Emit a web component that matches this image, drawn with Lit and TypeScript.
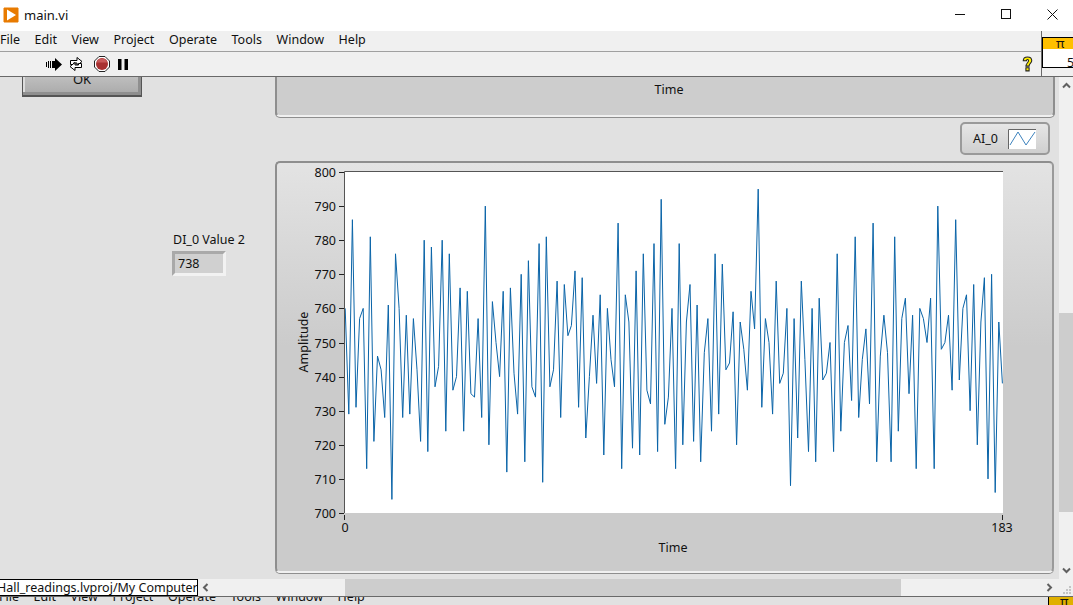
import { LitElement, html, svg, css } from "lit";
import { customElement } from "lit/decorators.js";

// waveform read off the reference, one value per sample
const SAMPLES = [
  760, 729, 786, 731, 757, 760, 713, 781, 721, 746, 742, 728, 761, 704, 776, 760, 728, 758, 729, 757,
  742, 721, 780, 718, 778, 737, 743, 780, 724, 776, 736, 740, 766, 724, 765, 735, 734, 757, 728, 790,
  720, 762, 750, 740, 765, 712, 766, 741, 729, 770, 715, 774, 737, 734, 779, 709, 781, 737, 742, 768,
  728, 767, 752, 755, 771, 731, 769, 722, 740, 758, 738, 764, 717, 760, 745, 737, 785, 713, 764, 756,
  719, 771, 717, 776, 736, 732, 779, 718, 792, 726, 734, 760, 713, 779, 720, 756, 767, 721, 761, 715,
  747, 757, 724, 776, 729, 773, 742, 744, 759, 720, 756, 748, 736, 765, 754, 795, 731, 757, 750, 729,
  768, 738, 741, 760, 708, 757, 722, 768, 745, 718, 760, 715, 763, 739, 741, 750, 718, 776, 724, 750,
  755, 733, 781, 728, 745, 754, 732, 785, 715, 746, 758, 747, 715, 781, 724, 757, 763, 735, 758, 713,
  760, 757, 750, 763, 713, 790, 748, 750, 758, 736, 786, 739, 760, 764, 730, 767, 720, 756, 769, 710,
  770, 706, 756, 738,
];

const MENU = ["File", "Edit", "View", "Project", "Operate", "Tools", "Window", "Help"];
const TICKS = [800, 790, 780, 770, 760, 750, 740, 730, 720, 710, 700];

// plot geometry inside the 778x413 graph svg
const PLOT = { x: 69, y: 11, w: 658, h: 341 };
const sx = (i: number) => PLOT.x + 0.2 + (i * 657.2) / 183;
const sy = (v: number) => PLOT.y + ((800 - v) / 100) * PLOT.h;

@customElement("app-root")
export class AppRoot extends LitElement {
  static styles = css`
    :host {
      display: block;
      position: relative;
      width: 1073px;
      height: 605px;
      overflow: hidden;
      background: #e1e1e1;
      font-family: "Noto Sans", "Liberation Sans", sans-serif;
      font-size: 12.5px;
      color: #111;
    }
    .title {
      height: 31px;
      box-sizing: border-box;
      padding: 0 0 2px 3px;
      background: #fff;
      display: flex;
      align-items: center;
      gap: 5px;
      font-size: 13px;
    }
    .title .name {
      flex: 1;
    }
    .winbtn {
      display: block;
      margin-right: 30px;
    }
    .winbtn:last-child {
      margin-right: 15px;
    }
    .menu {
      height: 17px;
      padding-bottom: 3px;
      background: #f0f0f0;
      border-bottom: 1px solid #a0a0a0;
      display: flex;
      align-items: center;
      gap: 14.6px;
      box-sizing: content-box;
    }
    .toolbar {
      height: 24px;
      background: #f0f0f0;
      border-bottom: 1px solid #696969;
      display: flex;
      align-items: center;
      padding-left: 46px;
      gap: 6px;
    }
    .toolbar .help {
      margin-left: auto;
      margin-right: 39px;
    }
    .middle {
      height: 502px;
      display: flex;
    }
    .canvas {
      position: relative;
      flex: 1;
      overflow: hidden;
    }
    .vscroll {
      width: 14px;
      background: #f0f0f0;
      display: flex;
      flex-direction: column;
      align-items: center;
      justify-content: space-between;
      position: relative;
      padding: 5px 0;
      box-sizing: border-box;
    }
    .vthumb {
      position: absolute;
      left: 0;
      right: 0;
      top: 236px;
      height: 199px;
      background: #cdcdcd;
    }
    .hscroll {
      height: 17px;
      background: #f0f0f0;
      position: relative;
    }
    .hthumb {
      position: absolute;
      left: 345px;
      width: 556px;
      top: 0;
      bottom: 0;
      background: #cdcdcd;
    }
    .chev {
      position: absolute;
      top: 4px;
    }
    .grip {
      position: absolute;
      right: 1px;
      bottom: 1px;
    }
    .strip {
      height: 9px;
      border-top: 1px solid #696969;
      box-sizing: border-box;
      overflow: hidden;
      background: #e1e1e1;
    }
    .strip .menu {
      background: none;
      border: none;
      margin-top: -9px;
      margin-left: -1px;
    }
    .tip {
      position: absolute;
      left: -2px;
      top: 579px;
      height: 17px;
      width: 200px;
      box-sizing: border-box;
      background: #fff;
      border: 1px solid #000;
      text-indent: -2px;
      line-height: 16px;
      white-space: nowrap;
      overflow: hidden;
    }
    .side {
      position: absolute;
      left: 1041px;
      top: 31px;
      width: 32px;
      height: 45px;
      border-left: 1px solid #696969;
      background: #f0f0f0;
      padding: 6px 0 8px 0;
      box-sizing: border-box;
    }
    .side .box {
      border: 1px solid #000;
      border-right: none;
      height: 100%;
      box-sizing: border-box;
      background: #fff;
    }
    .side .pi {
      background: #ffc000;
      height: 11px;
      line-height: 10px;
      font-size: 13px;
      padding-left: 13px;
    }
    .side .val {
      line-height: 28px;
      height: 19px;
      margin-left: 24px;
      overflow: hidden;
    }
    .sidefoot {
      position: absolute;
      left: 1048px;
      top: 597px;
      width: 25px;
      height: 8px;
      background: #e0b000;
      border-left: 1px solid #000;
      font-size: 13px;
      line-height: 8px;
      padding-left: 11px;
      box-sizing: border-box;
      overflow: hidden;
    }

    /* front panel objects sit where they were dropped on the VI panel */
    .ok {
      position: absolute;
      left: 22px;
      top: -20px;
      width: 120px;
      height: 40px;
      box-sizing: border-box;
      border: 1px solid #555;
      border-bottom-width: 2px;
      background: linear-gradient(#d4d4d4, #a9a9a9);
      box-shadow: inset -3px -3px 0 #8f8f8f, inset 2px 2px 0 #dcdcdc;
      text-align: center;
      line-height: 42px;
      font-size: 13px;
    }
    .topgraph {
      position: absolute;
      left: 275px;
      top: -30px;
      width: 780px;
      height: 70px;
      box-sizing: border-box;
      background: #cdcdcd;
      border: 2px solid #8e8e8e;
      border-bottom-color: #f0f0f0;
      box-shadow: 0 1px 0 #8e8e8e;
      border-radius: 5px;
      text-align: center;
      padding: 32px 0 0 8px;
    }
    .legend {
      position: absolute;
      left: 960px;
      top: 45px;
      width: 90px;
      height: 33px;
      box-sizing: border-box;
      border: 2px solid #9a9a9a;
      border-radius: 5px;
      background: linear-gradient(#e6e6e6, #cfcfcf);
      display: flex;
      align-items: center;
      padding-left: 11px;
      gap: 10px;
    }
    .legend svg {
      display: block;
    }
    .indicator {
      position: absolute;
      left: 172px;
      top: 155px;
    }
    .indicator .lbl {
      padding-left: 1px;
      line-height: 16px;
      margin-bottom: 3px;
    }
    .indicator .num {
      width: 54px;
      height: 25px;
      box-sizing: border-box;
      background: #d0d0d0;
      border: 3px solid;
      border-color: #a9a9a9 #f2f2f2 #f2f2f2 #a9a9a9;
      line-height: 19px;
      padding-left: 3px;
    }
    .graph {
      position: absolute;
      left: 275px;
      top: 84px;
      width: 779px;
      height: 412px;
      box-sizing: border-box;
      border: 2px solid #8e8e8e;
      border-bottom-color: #f0f0f0;
      border-right-color: #9a9a9a;
      box-shadow: 0 1px 0 #8e8e8e;
      border-radius: 5px;
      background: linear-gradient(#e3e3e3, #cbcbcb 45%, #cbcbcb);
    }
    .graph svg {
      position: absolute;
      left: -1px;
      top: -2px;
      display: block;
    }
    .graph text {
      font-family: "Noto Sans", "Liberation Sans", sans-serif;
      font-size: 12.5px;
      fill: #111;
    }
  `;

  private menu() {
    return html`<div class="menu">${MENU.map((m) => html`<span>${m}</span>`)}</div>`;
  }

  private graph() {
    const points = SAMPLES.map((v, i) => `${sx(i).toFixed(1)},${sy(v).toFixed(1)}`).join(" ");
    const right = PLOT.x + PLOT.w;
    const bottom = PLOT.y + PLOT.h;
    return html`<svg width="778" height="411" viewBox="0 0 778 411">
      <rect x=${PLOT.x} y=${PLOT.y} width=${PLOT.w} height=${PLOT.h} fill="#fff"></rect>
      <polyline points=${points} fill="none" stroke="#0a64a8" stroke-width="1"></polyline>
      <path d="M${PLOT.x - 0.5} ${bottom}V${PLOT.y - 0.5}H${right}" fill="none" stroke="#555"></path>
      ${TICKS.map((t) => {
        const y = Math.round(sy(t)) + 0.5;
        return svg`<path d="M${PLOT.x - 6} ${y}h5" stroke="#222"></path>
          <text x=${PLOT.x - 9} y=${y + 4.5} text-anchor="end">${t}</text>`;
      })}
      <path d="M${PLOT.x - 0.5} ${bottom + 2}v5M${right - 0.5} ${bottom + 2}v5" stroke="#222"></path>
      <text x=${PLOT.x} y=${bottom + 19} text-anchor="middle">0</text>
      <text x=${right - 1} y=${bottom + 19} text-anchor="middle">183</text>
      <text x=${397} y=${390.5} text-anchor="middle">Time</text>
      <text transform="translate(32 181) rotate(-90)" text-anchor="middle">Amplitude</text>
    </svg>`;
  }

  render() {
    return html`
      <div class="title">
        <svg width="16" height="16" viewBox="0 0 16 16">
          <path d="M1 1h14v14H1z" fill="#e87b00" stroke="#e87b00" stroke-linejoin="round"></path>
          <path d="M4 2.500l9 5.500-9 5.500z" fill="#fff"></path>
        </svg>
        <span class="name">main.vi</span>
        <svg class="winbtn" width="11" height="11" viewBox="0 0 11 11"><path d="M0 5.500h10" stroke="#111"></path></svg>
        <svg class="winbtn" width="11" height="11" viewBox="0 0 11 11"><rect x=".5" y=".5" width="9" height="9" fill="none" stroke="#111"></rect></svg>
        <svg class="winbtn" width="11" height="11" viewBox="0 0 11 11"><path d="M.5.5l10 10M10.500.5l-10 10" stroke="#111"></path></svg>
      </div>
      ${this.menu()}
      <div class="toolbar">
        <svg width="16" height="13" viewBox="0 0 16 13">
          <path d="M0 4h1v5H0zM2 3h1v7H2zM4 3h1v7H4z" fill="#000"></path>
          <path d="M6 3h3V0l7 6.500L9 13V10H6z" fill="#000"></path>
        </svg>
        <svg width="16" height="16" viewBox="0 0 16 16">
          <path d="M2.500 8.500v-4H9v-3l5 4-5 4V7H5.500v1.500z" fill="#fff" stroke="#000"></path>
          <path d="M13.500 7.500v4H7v3l-5-4 5-4V9h3.500V7.500z" fill="#fff" stroke="#000"></path>
        </svg>
        <svg width="16" height="16" viewBox="0 0 16 16" style="margin-left:4px">
          <path d="M5 .5h6L15.500 5v6L11 15.500H5L.5 11V5z" fill="#fff" stroke="#222"></path>
          <circle cx="8" cy="8" r="6" fill="#a83232"></circle>
          <path d="M3 6.500a5 4 0 0 1 10 0z" fill="#c95a5a"></path>
        </svg>
        <svg width="10" height="11" viewBox="0 0 10 11" style="margin-left:2px">
          <path d="M0 0h3.500v11H0zM6.500 0H10v11H6.500z" fill="#000"></path>
        </svg>
        <svg class="help" width="13" height="17" viewBox="0 0 12 16">
          <path d="M2 4.500C2 2 4 1 6 1s4 1 4 3.500c0 2-2.500 2.500-2.500 5H4.500C4.500 7 7 6 7 4.500 7 3 5 3 5 4.500zM4.500 11h3v3h-3z" fill="#ffee00" stroke="#222"></path>
        </svg>
      </div>
      <div class="middle">
        <div class="canvas">
          <div class="ok">OK</div>
          <div class="topgraph">Time</div>
          <div class="legend">
            <span>AI_0</span>
            <svg width="28" height="20" viewBox="0 0 28 20">
              <rect width="28" height="20" fill="#fff"></rect>
              <path d="M.5 20V.5H28" fill="none" stroke="#666"></path>
              <path d="M2 16L10 3l8 13 9-13" fill="none" stroke="#3d82bd"></path>
            </svg>
          </div>
          <div class="indicator">
            <div class="lbl">DI_0 Value 2</div>
            <div class="num">738</div>
          </div>
          <div class="graph">${this.graph()}</div>
        </div>
        <div class="vscroll">
          <div class="vthumb"></div>
          <svg width="9" height="7" viewBox="0 0 9 7" style="position:relative"><path d="M1 5.500l3.500-3.500 3.500 3.500" fill="none" stroke="#606060" stroke-width="2"></path></svg>
          <svg width="9" height="7" viewBox="0 0 9 7" style="position:relative"><path d="M1 1.500l3.500 3.500 3.500-3.500" fill="none" stroke="#606060" stroke-width="2"></path></svg>
        </div>
      </div>
      <div class="hscroll">
        <div class="hthumb"></div>
        <svg class="chev" style="left:202px" width="7" height="9" viewBox="0 0 7 9"><path d="M5.500 1L2 4.500 5.500 8" fill="none" stroke="#606060" stroke-width="2"></path></svg>
        <svg class="chev" style="left:1046px" width="7" height="9" viewBox="0 0 7 9"><path d="M1.500 1L5 4.500 1.500 8" fill="none" stroke="#606060" stroke-width="2"></path></svg>
        <svg class="grip" width="10" height="10" viewBox="0 0 10 10"><path d="M7 1h2v2H7zM4 4h2v2H4zM7 4h2v2H7zM1 7h2v2H1zM4 7h2v2H4zM7 7h2v2H7z" fill="#c4c4c4"></path></svg>
      </div>
      <div class="strip">${this.menu()}</div>
      <div class="tip">Hall_readings.lvproj/My Computer</div>
      <div class="side">
        <div class="box">
          <div class="pi">π</div>
          <div class="val">5</div>
        </div>
      </div>
      <div class="sidefoot">π</div>
    `;
  }
}
